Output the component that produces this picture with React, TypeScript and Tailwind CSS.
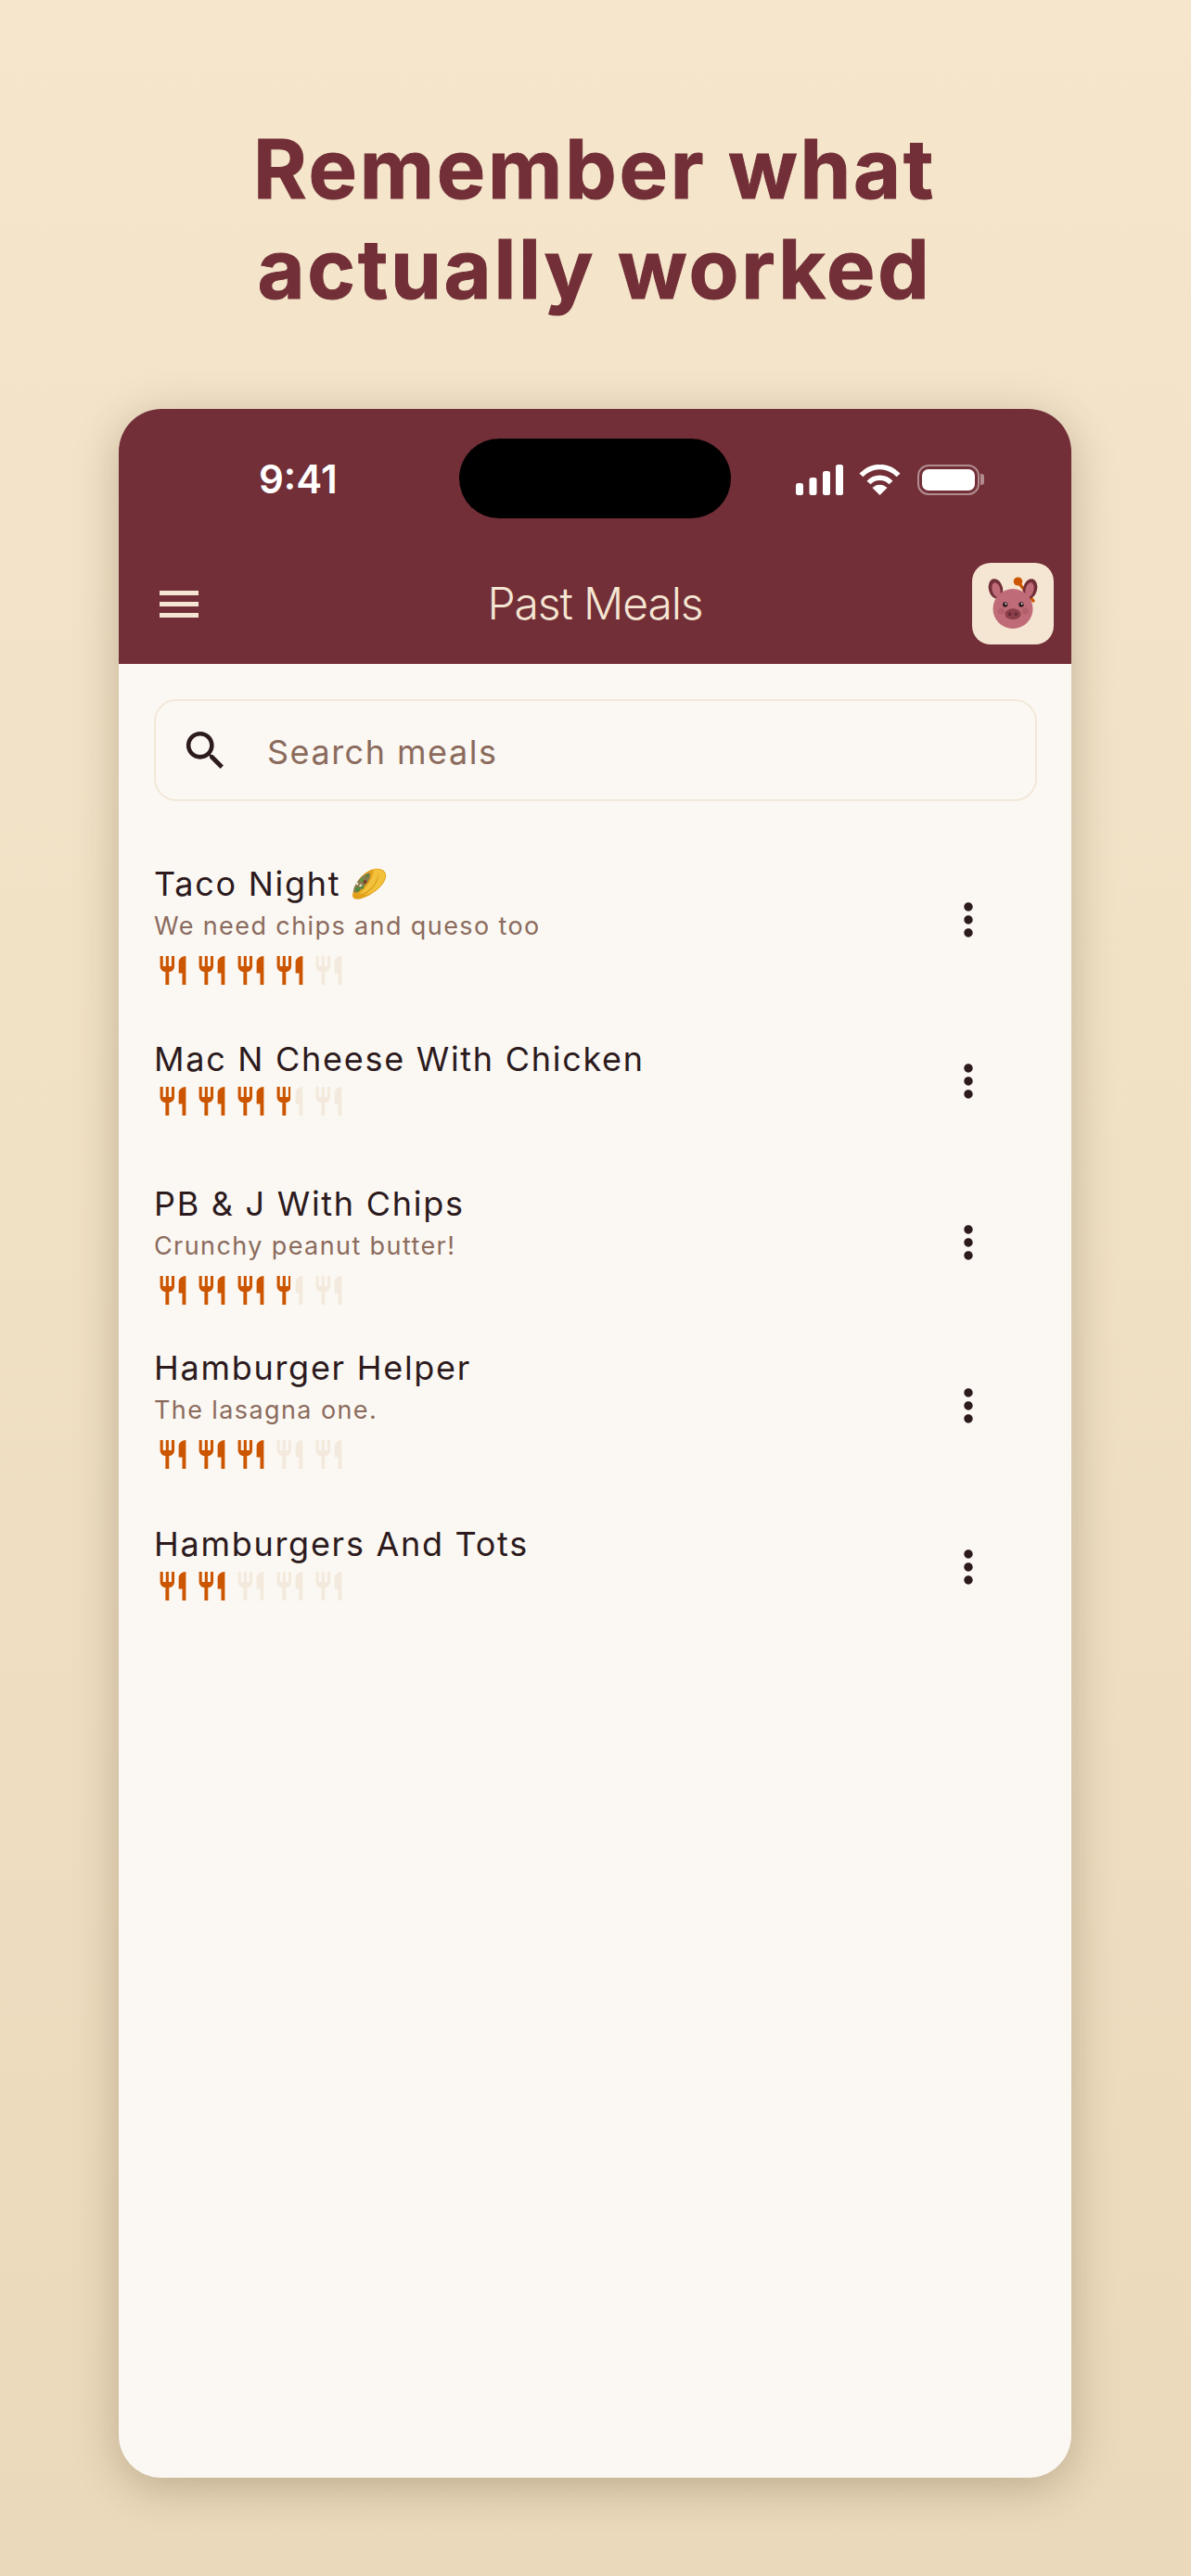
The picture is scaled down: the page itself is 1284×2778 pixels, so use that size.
const restaurantPath =
  'M11 9H9V2H7v7H5V2H3v7c0 2.12 1.66 3.84 3.75 3.97V22h2.5v-9.03C11.34 12.84 13 11.12 13 9V2h-2v7zm5-3v8h2.5v8H21V2c-2.76 0-5 2.24-5 4z';

function Utensils({ className }: { className: string }) {
  return (
    <svg viewBox="0 0 24 24" className={className} fill="currentColor">
      <path d={restaurantPath} />
    </svg>
  );
}

function Rating({ value }: { value: number }) {
  return (
    <div className="mt-[4px] flex h-[37px] gap-[5px] pl-[2px]">
      {[0, 1, 2, 3, 4].map((i) => {
        const fill = Math.max(0, Math.min(1, value - i));
        return (
          <div key={i} className="relative h-[37px] w-[37px]">
            <Utensils className="h-[37px] w-[37px] text-[#f3e9dc]" />
            {fill > 0 && (
              <div className="absolute left-0 top-0 h-[37px] overflow-hidden" style={{ width: `${fill * 100}%` }}>
                <Utensils className="h-[37px] w-[37px] text-[#cc5500]" />
              </div>
            )}
          </div>
        );
      })}
    </div>
  );
}

function Taco() {
  return (
    <svg viewBox="0 0 38 34" className="ml-[12px] h-[34px] w-[38px] shrink-0">
      <path d="M1 30C2 18 12 3 25 1c8-1 13 3 12 9-1 7-9 14-17 19-7 4-18 8-19 1z" fill="#e3a21c" />
      <path d="M9 27C16 21 23 12 24 2c8-2 13 3 12 8-1 6-8 13-15 17-3 2-8 3-12 0z" fill="#f2c23c" />
      <path d="M2 25C3 17 10 8 19 5c2 2 1 6-1 9-3 5-7 9-11 12-2 1-5 1-5-1z" fill="#8a7a4e" />
      <circle cx="6.5" cy="23" r="2.5" fill="#4d8a3a" />
      <circle cx="11" cy="13" r="2.1" fill="#5e9a42" />
      <circle cx="14.5" cy="15" r="2" fill="#7c3f24" />
      <circle cx="10" cy="19" r="1.6" fill="#e8e2d0" />
      <circle cx="11.5" cy="21" r="1.8" fill="#4d8a3a" />
      <circle cx="17" cy="8.5" r="1.6" fill="#4d8a3a" />
      <circle cx="6" cy="17" r="1.4" fill="#e8e2d0" />
      <path d="M1 29c4 3 11-1 17-5 7-5 10-12 11-19 1 8-4 16-11 21-7 5-16 8-17 3z" fill="#e0a01a" />
    </svg>
  );
}

function PigAvatar() {
  return (
    <svg viewBox="0 0 88 88" className="h-[88px] w-[88px]">
      <path d="M49 20L66 41" stroke="#cc5500" strokeWidth="3.4" strokeLinecap="round" />
      <ellipse cx="49.5" cy="20" rx="4.8" ry="4.6" fill="#cc5500" />
      <ellipse cx="25.5" cy="28" rx="7.6" ry="11" transform="rotate(-14 25.5 28)" fill="#722f37" />
      <ellipse cx="26" cy="29" rx="4.4" ry="8" transform="rotate(-14 26 29)" fill="#c06c78" />
      <ellipse cx="62.5" cy="28" rx="7.6" ry="11" transform="rotate(14 62.5 28)" fill="#722f37" />
      <ellipse cx="62" cy="29" rx="4.4" ry="8" transform="rotate(14 62 29)" fill="#c06c78" />
      <circle cx="44" cy="49.5" r="21.5" fill="#c06c78" />
      <circle cx="31.5" cy="52" r="3.6" fill="#b35f6c" />
      <circle cx="57.5" cy="52" r="3.6" fill="#b35f6c" />
      <ellipse cx="44" cy="55.3" rx="8.6" ry="6" fill="#8a3f4b" />
      <ellipse cx="40.6" cy="55.3" rx="1.5" ry="1.9" fill="#5f2a33" />
      <ellipse cx="47.4" cy="55.3" rx="1.5" ry="1.9" fill="#5f2a33" />
      <circle cx="35.7" cy="45" r="2.7" fill="#2c1a1d" />
      <circle cx="36.4" cy="44.2" r="0.9" fill="#fff" />
      <circle cx="53" cy="45" r="2.7" fill="#2c1a1d" />
      <circle cx="53.7" cy="44.2" r="0.9" fill="#fff" />
    </svg>
  );
}

function StatusIcons() {
  return (
    <div className="flex items-center">
      <svg viewBox="0 0 51 33" className="h-[33px] w-[51px]" fill="#fff">
        <rect x="0" y="20" width="8" height="13" rx="2.5" />
        <rect x="14.5" y="14" width="8" height="19" rx="2.5" />
        <rect x="29" y="7" width="8" height="26" rx="2.5" />
        <rect x="43" y="0" width="8" height="33" rx="2.5" />
      </svg>
      <svg viewBox="0 0 45 33" className="ml-[17px] h-[33px] w-[45px]" fill="none" stroke="#fff" strokeWidth="5.4">
        <path d="M2.5 11.5C14 -0.5 31 -0.5 42.5 11.5" />
        <path d="M10.5 19.5C17 12.5 28 12.5 34.5 19.5" />
        <path d="M22.5 33L14.5 25C19 20.5 26 20.5 30.5 25Z" fill="#fff" stroke="none" />
      </svg>
      <div className="ml-[18px] flex items-center">
        <div className="flex h-[33px] w-[67px] items-center justify-center rounded-[12px] border-2 border-white/45">
          <div className="h-[23px] w-[57px] rounded-[7px] bg-white" />
        </div>
        <div className="ml-[1px] h-[12px] w-[4px] rounded-r-[3px] bg-white/45" />
      </div>
    </div>
  );
}

const meals = [
  { title: 'Taco Night', taco: true, note: 'We need chips and queso too', rating: 4, row: 'h-[174px]', text: 'pt-[25px]' },
  { title: 'Mac N Cheese With Chicken', rating: 3.5, row: 'h-[174px]', text: 'pt-[40px]' },
  { title: 'PB & J With Chips', note: 'Crunchy peanut butter!', rating: 3.5, row: 'h-[173px]', text: 'pt-[22px]' },
  { title: 'Hamburger Helper', note: 'The lasagna one.', rating: 3, row: 'h-[179px]', text: 'pt-[26px]' },
  { title: 'Hamburgers And Tots', rating: 2, row: 'h-[170px]', text: 'pt-[37px]' },
];

export default function App() {
  return (
    <div className="flex h-[2778px] w-[1284px] flex-col overflow-hidden bg-gradient-to-b from-[#f5e6cc] to-[#ebd9bb] pt-[128px] font-[Inter,sans-serif]">
      <h1 className="pr-[2px] text-center text-[88px] font-bold leading-[108px] tracking-[2.8px] text-[#722f37] [-webkit-text-stroke:1px_#722f37]">
        Remember what
        <br />
        actually worked
      </h1>

      <div className="ml-[128px] mt-[97px] flex h-[2231px] w-[1027px] flex-col overflow-hidden rounded-[46px] bg-[#fbf8f3] shadow-[0_10px_48px_rgba(70,50,20,0.28)]">
        <header className="flex h-[275px] shrink-0 flex-col bg-[#722f37]">
          <div className="relative flex h-[152px] items-center justify-between pl-[151px] pr-[94px]">
            <div className="text-[42px] font-semibold leading-[50px] text-white">9:41</div>
            <div className="absolute left-[367px] top-[32px] h-[86px] w-[293px] rounded-[43px] bg-black" />
            <StatusIcons />
          </div>
          <div className="flex h-[116px] items-center pl-[44px] pr-[19px]">
            <div className="flex w-[43px] flex-col gap-[7px] pr-[1px]">
              <div className="h-[5px] bg-[#f5e6d3]" />
              <div className="h-[5px] bg-[#f5e6d3]" />
              <div className="h-[5px] bg-[#f5e6d3]" />
            </div>
            <div className="flex-1 pl-[20px] text-center text-[48px] font-light leading-[60px] tracking-[-1.1px] text-[#f5e6d3]">
              Past Meals
            </div>
            <div className="h-[88px] w-[88px] rounded-[20px] bg-[#f5e6d3]">
              <PigAvatar />
            </div>
          </div>
        </header>

        <main className="px-[38px] pt-[38px]">
          <div className="flex h-[110px] w-[952px] items-center rounded-[24px] border-2 border-[#f2e8da] pl-[26px]">
            <svg viewBox="0 0 24 24" className="h-[55px] w-[55px] text-[#2c1a1d]" fill="currentColor">
              <path d="M15.5 14h-.79l-.28-.27C15.41 12.59 16 11.11 16 9.5 16 5.91 13.09 3 9.5 3S3 5.91 3 9.5 5.91 16 9.5 16c1.61 0 3.09-.59 4.23-1.57l.27.28v.79l5 4.99L20.49 19l-4.99-5zm-6 0C7.01 14 5 11.99 5 9.5S7.01 5 9.5 5 14 7.01 14 9.5 11.99 14 9.5 14z" />
            </svg>
            <span className="ml-[39px] pt-[4px] text-[36px] leading-[46px] tracking-[1.5px] text-[#8b6b5d]">
              Search meals
            </span>
          </div>
        </main>

        <ul className="mt-[41px] flex flex-col pl-[38px] pr-[83px]">
          {meals.map((m) => (
            <li key={m.title} className={`flex items-center justify-between ${m.row}`}>
              <div className={`flex h-full flex-col ${m.text}`}>
                <div className="flex h-[46px] items-center text-[36px] leading-[46px] tracking-[1.72px] text-[#2c1a1d]">
                  {m.title}
                  {m.taco && <Taco />}
                </div>
                {m.note && (
                  <div className="h-[48px] text-[27px] leading-[46px] tracking-[1.4px] text-[#8b6b5d]">{m.note}</div>
                )}
                <Rating value={m.rating} />
              </div>
              <svg viewBox="0 0 24 24" className="h-[56px] w-[56px] text-[#2c1a1d]" fill="currentColor">
                <path d="M12 8c1.1 0 2-.9 2-2s-.9-2-2-2-2 .9-2 2 .9 2 2 2zm0 2c-1.1 0-2 .9-2 2s.9 2 2 2 2-.9 2-2-.9-2-2-2zm0 6c-1.1 0-2 .9-2 2s.9 2 2 2 2-.9 2-2-.9-2-2-2z" />
              </svg>
            </li>
          ))}
        </ul>
      </div>
    </div>
  );
}
